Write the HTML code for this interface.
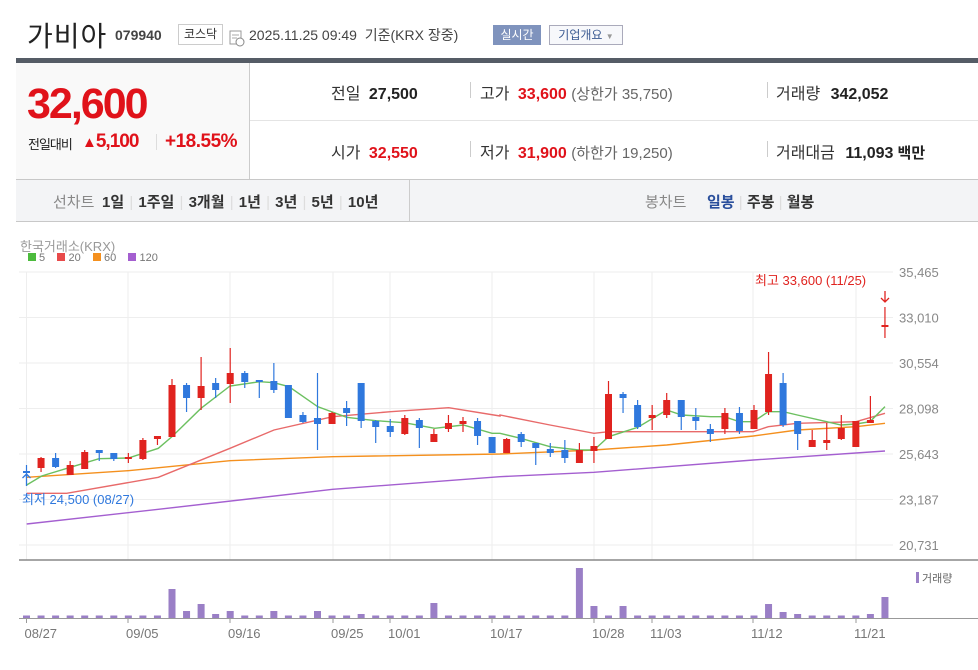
<!DOCTYPE html>
<html><head><meta charset="utf-8">
<style>
*{margin:0;padding:0;box-sizing:border-box}
body{width:978px;height:670px;background:#fff;font-family:"Liberation Sans","Noto Sans CJK KR",sans-serif;position:relative;overflow:hidden;color:#333}
.a{position:absolute;white-space:nowrap}
.red{color:#e0121a}
.b{font-weight:bold}
.lbl{color:#333;font-size:16px}
</style></head><body>
<div class="a" style="left:27px;top:15px;font-size:28px;color:#222;letter-spacing:1px">가비아</div>
<div class="a b" style="left:115px;top:27px;font-size:14px;color:#444">079940</div>
<div class="a" style="left:178px;top:24px;width:45px;height:21px;border:1px solid #ccc;font-size:12px;line-height:19px;text-align:center;color:#333">코스닥</div>
<svg class="a" style="left:229px;top:29px" width="16" height="18"><rect x="1" y="2" width="11" height="13" fill="#fff" stroke="#999"/><line x1="3" y1="6" x2="10" y2="6" stroke="#aaa"/><line x1="3" y1="9" x2="8" y2="9" stroke="#aaa"/><circle cx="11" cy="13" r="4" fill="#fff" stroke="#888"/></svg>
<div class="a" style="left:249px;top:25px;font-size:14px;color:#444">2025.11.25 09:49 &nbsp;기준(KRX 장중)</div>
<div class="a" style="left:493px;top:25px;width:48px;height:20px;background:#7f93bd;color:#fff;font-size:12px;line-height:20px;text-align:center">실시간</div>
<div class="a" style="left:549px;top:25px;width:74px;height:20px;border:1px solid #aab;color:#3b5a92;font-size:12px;line-height:18px;text-align:center;background:#f7f8fb">기업개요 <span style="font-size:8px;color:#999">▼</span></div>

<div class="a" style="left:16px;top:58px;width:962px;height:5px;background:#555c66"></div>
<div class="a" style="left:16px;top:63px;width:233px;height:116px;background:#f9f9f9"></div>
<div class="a" style="left:249px;top:63px;width:1px;height:116px;background:#ccc"></div>
<div class="a" style="left:250px;top:120px;width:728px;height:1px;background:#e4e4e4"></div>
<div class="a b red" style="left:27px;top:80px;font-size:43px;letter-spacing:-2px">32,600</div>
<div class="a" style="left:28px;top:134px;font-size:13px;color:#222;letter-spacing:-1px">전일대비</div>
<div class="a b red" style="left:82px;top:131px;font-size:19px;letter-spacing:-1px"><span style="font-size:15px">▲</span>5,100</div>
<div class="a" style="left:156px;top:134px;width:1px;height:16px;background:#ddd"></div>
<div class="a b red" style="left:165px;top:131px;font-size:19px;letter-spacing:-0.5px">+18.55%</div>

<div class="a lbl" style="left:331px;top:80px">전일 <b style="color:#222;margin-left:4px">27,500</b></div>
<div class="a" style="left:470px;top:82px;width:1px;height:16px;background:#ccc"></div>
<div class="a lbl" style="left:480px;top:80px">고가 <b class="red" style="margin-left:4px">33,600</b> <span style="color:#666;font-size:15px">(상한가 35,750)</span></div>
<div class="a" style="left:767px;top:82px;width:1px;height:16px;background:#ccc"></div>
<div class="a lbl" style="left:776px;top:80px">거래량 <b style="color:#222;margin-left:6px">342,052</b></div>
<div class="a lbl" style="left:331px;top:139px">시가 <b class="red" style="margin-left:4px">32,550</b></div>
<div class="a" style="left:470px;top:141px;width:1px;height:16px;background:#ccc"></div>
<div class="a lbl" style="left:480px;top:139px">저가 <b class="red" style="margin-left:4px">31,900</b> <span style="color:#666;font-size:15px">(하한가 19,250)</span></div>
<div class="a" style="left:767px;top:141px;width:1px;height:16px;background:#ccc"></div>
<div class="a lbl" style="left:776px;top:139px">거래대금 <b style="color:#222;margin-left:6px">11,093</b><span style="color:#222;font-size:15px;font-weight:bold"> 백만</span></div>

<div class="a" style="left:16px;top:179px;width:962px;height:43px;background:#f3f4f6;border-top:1px solid #c8c8c8;border-bottom:1px solid #c8c8c8"></div>
<div class="a" style="left:409px;top:180px;width:1px;height:41px;background:#ccc"></div>
<div class="a" style="left:53px;top:191px;font-size:15px;color:#888">선차트</div>
<div class="a b" style="left:102px;top:191px;font-size:15px;color:#333;word-spacing:1px">1일 <span style="color:#ddd;font-weight:normal">|</span> 1주일 <span style="color:#ddd;font-weight:normal">|</span> 3개월 <span style="color:#ddd;font-weight:normal">|</span> 1년 <span style="color:#ddd;font-weight:normal">|</span> 3년 <span style="color:#ddd;font-weight:normal">|</span> 5년 <span style="color:#ddd;font-weight:normal">|</span> 10년</div>
<div class="a" style="left:645px;top:191px;font-size:15px;color:#888">봉차트</div>
<div class="a b" style="left:707px;top:191px;font-size:15px;color:#333"><span style="color:#2a4f9c">일봉</span> <span style="color:#ddd;font-weight:normal">|</span> 주봉 <span style="color:#ddd;font-weight:normal">|</span> 월봉</div>

<div class="a" style="left:20px;top:236px;font-size:13px;color:#999">한국거래소(KRX)</div>
<div class="a" style="left:28px;top:252px;font-size:11px;color:#777">
<span style="display:inline-block;width:8px;height:8px;background:#4cbb3d"></span> 5 &nbsp;&nbsp;
<span style="display:inline-block;width:8px;height:8px;background:#e84a4a"></span> 20 &nbsp;&nbsp;
<span style="display:inline-block;width:8px;height:8px;background:#f4901e"></span> 60 &nbsp;&nbsp;
<span style="display:inline-block;width:8px;height:8px;background:#a45fd0"></span> 120</div>

<svg id="ch" class="a" style="left:0;top:0" width="978" height="670"></svg>
<script>
var s='';
[272,317.5,363,408.5,454,499.5,545].forEach(function(y){s+='<line x1="19" y1="'+y+'" x2="893" y2="'+y+'" stroke="#eee" stroke-width="1"/>';});
[26.5,128,230,333,390,492,594,652,753,856].forEach(function(x){s+='<line x1="'+x+'" y1="272" x2="'+x+'" y2="560" stroke="#eee"/>';});
var yl=['35,465','33,010','30,554','28,098','25,643','23,187','20,731'];
[272,317.5,363,408.5,454,499.5,545].forEach(function(y,i){s+='<text x="899" y="'+(y+5)+'" font-size="13" fill="#888" font-family="Liberation Sans">'+yl[i]+'</text>';});
function pl(pts,c){var a=[];for(var i=0;i<pts.length;i+=2)a.push(pts[i]+','+pts[i+1]);return '<polyline points="'+a.join(' ')+'" fill="none" stroke="'+c+'" stroke-width="1.4"/>';}
function cv(z2,z3){var o=[];for(var i=0;i<z2.length;i+=2)o.push(z2[i]/3,230+z2[i+1]/3);for(i=0;i<z3.length;i+=2)o.push(500+z3[i]/3,230+z3[i+1]/3);return o;}
s+=pl(cv([80,882,475,838,998,778,1500,740],[0,740,282,727,760,690,1155,663]),'#a45fd0');
s+=pl(cv([80,742,385,722,690,692,998,680,1500,672],[0,672,282,660,500,645,760,618,892,600,1068,590,1155,580]),'#f4901e');
s+=pl(cv([80,790,200,790,475,742,690,655,822,600,998,560,1172,545,1346,533,1500,558],[0,555,150,585,282,610,326,605,500,605,760,605,805,590,892,580,1068,575,1155,550]),'#e86a6a');
s+=pl(cv([80,765,125,738,211,712,297,686,385,684,475,655,516,620,603,535,690,468,780,455,822,458,867,470,953,530,1040,562,1127,572,1213,578,1304,595,1390,585,1476,610],[0,610,62,625,150,650,236,660,282,660,326,620,413,592,500,540,545,555,632,560,673,560,718,575,760,575,805,545,850,545,892,555,980,575,1023,585,1068,582,1110,575,1155,530]),'#6cc060');
var C=[['b',471,473,465,478],['r',458,468,457,472],['b',458,467,453,468],['r',465,475,461,475],['r',452,469,450,469],['b',450,453,450,461],['b',453,459,453,461],['r',457,459,453,463],['r',440,459,438,460],['r',436,439,436,445],
['r',385,437,379,437],['b',385,398,383,412],['r',386,398,357,410],['b',383,390,378,398],['r',373,384,348,403],['b',373,382,371,388],['b',380,382,380,398],['b',381,390,363,393],['b',385,418,385,418],['b',415,422,412,423],
['b',418,424,373,450],['r',413,424,412,424],['b',408,413,401,426],['b',383,421,383,428],['b',421,427,420,443],['b',426,432,419,437],['r',418,434,415,435],['b',420,428,418,448],['r',434,442,429,442],['r',423,429,415,432],
['r',421,424,417,432],['b',421,436,418,445],['b',437,453,437,453],['r',439,453,438,453],['b',434,442,432,447],['b',443,448,443,465],['b',449,453,443,457],['b',450,458,440,463],['r',450,463,443,463],['r',446,451,437,463],
['r',394,439,381,439],['b',394,398,392,413],['b',405,427,400,429],['r',415,418,405,430],['r',400,415,393,418],['b',400,417,400,430],['b',417,421,408,430],['b',429,434,424,442],['r',413,429,408,434],['b',413,431,407,434],
['r',410,429,405,429],['r',374,412,352,415],['b',383,425,373,427],['b',421,434,421,450],['r',440,447,430,447],['r',440,443,423,450],['r',428,439,415,440],['r',421,447,421,447],['r',420,423,396,423],['r',325,327,307,338]];
var V={10:589,11:611,12:604,13:614,14:611,17:611,20:611,23:614,28:603,38:568,39:606,41:606,51:604,52:612,53:614,58:614,59:597};
C.forEach(function(c,i){var x=26.5+i*14.55;var col=c[0]=='r'?'#e0231f':'#2f78dd';
s+='<line x1="'+x+'" y1="'+c[3]+'" x2="'+x+'" y2="'+c[4]+'" stroke="'+col+'" stroke-width="1.2"/>';
s+='<rect x="'+(x-3.5)+'" y="'+c[1]+'" width="7" height="'+Math.max(2,c[2]-c[1])+'" fill="'+col+'"/>';
var vt=V[i]||615.5;s+='<rect x="'+(x-3.5)+'" y="'+vt+'" width="7" height="'+(618-vt)+'" fill="#9a7fc6"/>';});
s+='<line x1="19" y1="560" x2="978" y2="560" stroke="#888" stroke-width="1.5"/>';
s+='<line x1="19" y1="618.5" x2="978" y2="618.5" stroke="#999" stroke-width="1"/>';
var dl=[[26.5,'08/27'],[128,'09/05'],[230,'09/16'],[333,'09/25'],[390,'10/01'],[492,'10/17'],[594,'10/28'],[652,'11/03'],[753,'11/12'],[856,'11/21']];
dl.forEach(function(d){s+='<line x1="'+d[0]+'" y1="618" x2="'+d[0]+'" y2="623" stroke="#999"/><text x="'+(d[0]-2)+'" y="638" font-size="13" fill="#777" font-family="Liberation Sans">'+d[1]+'</text>';});
s+='<text x="755" y="285" font-size="13" fill="#e0231f" font-family="Liberation Sans,Noto Sans CJK KR">최고 33,600 (11/25)</text>';
s+='<path d="M885 291 V302 M881 298 L885 302 L889 298" stroke="#e0231f" fill="none" stroke-width="1.3"/>';
s+='<path d="M26.5 486 V474 M22.5 478 L26.5 474 L30.5 478" stroke="#2f78dd" fill="none" stroke-width="1.3"/>';
s+='<text x="22" y="504" font-size="13" fill="#2f78dd" font-family="Liberation Sans,Noto Sans CJK KR">최저 24,500 (08/27)</text>';
s+='<rect x="916" y="572" width="3" height="11" fill="#9a7fc6"/><text x="922" y="582" font-size="11" fill="#666" font-family="Liberation Sans,Noto Sans CJK KR">거래량</text>';
document.getElementById('ch').innerHTML=s;
</script>
</body></html>
